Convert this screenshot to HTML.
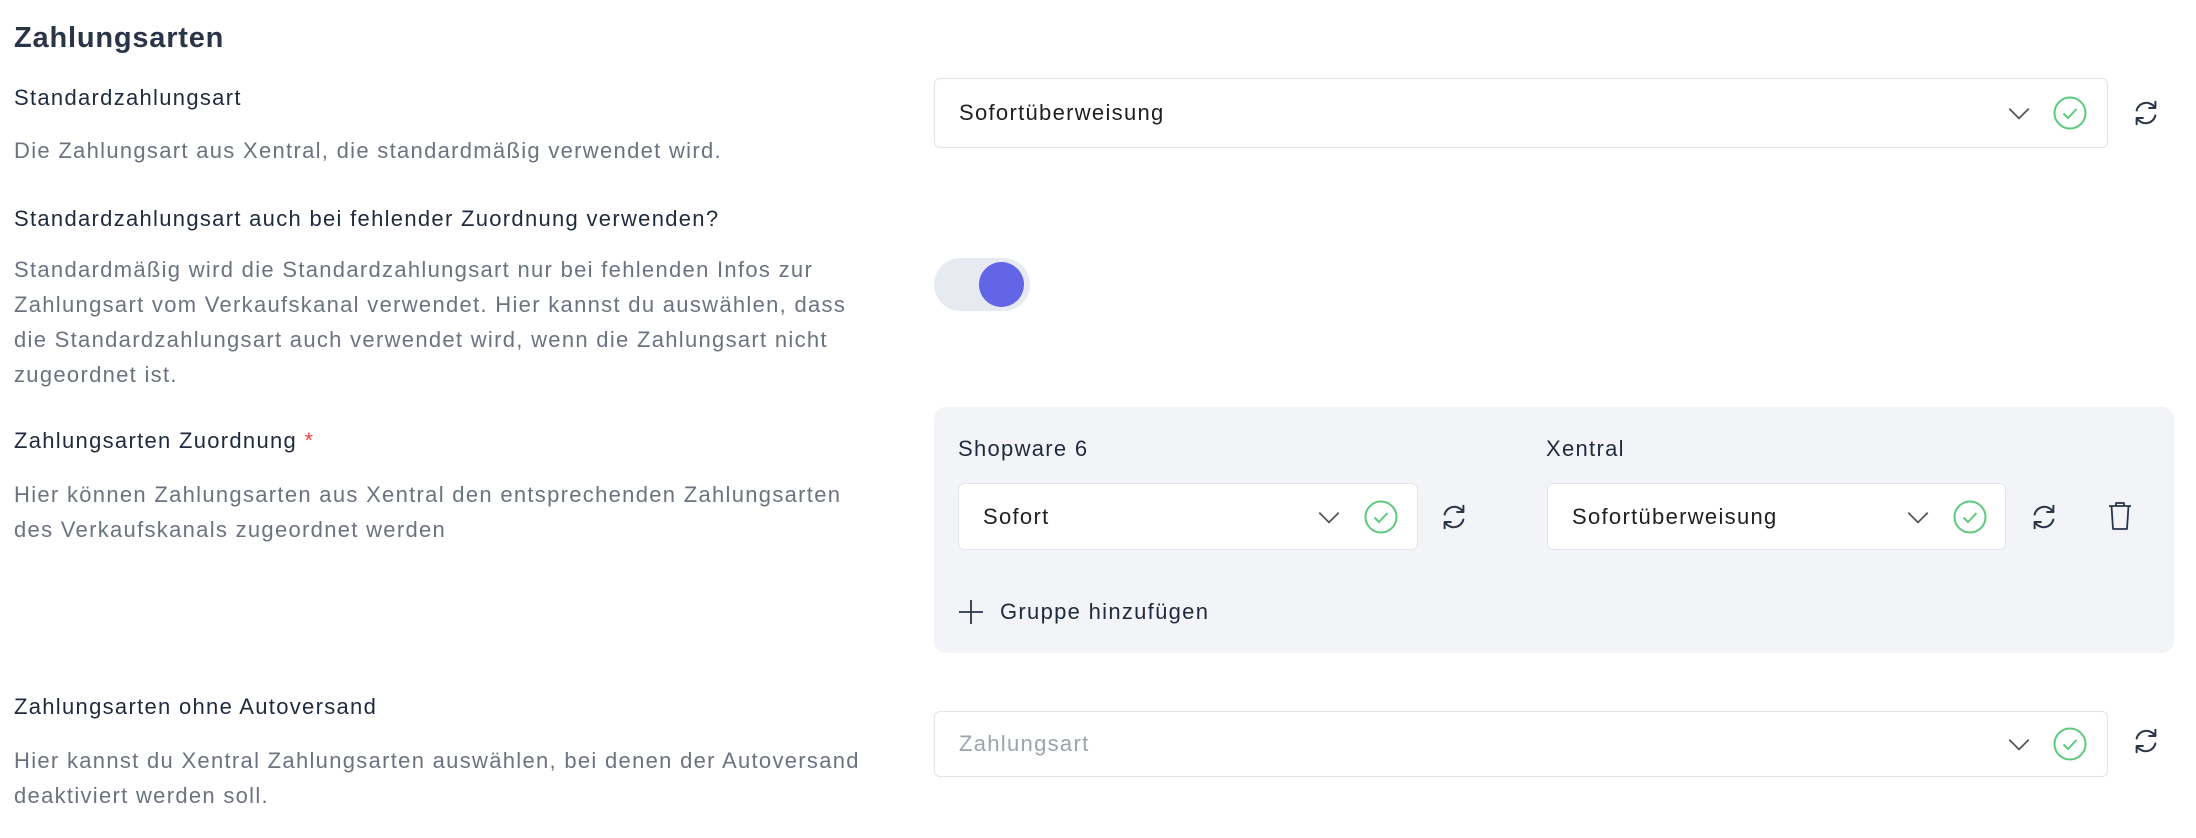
<!DOCTYPE html>
<html><head><meta charset="utf-8"><style>
*{box-sizing:border-box;margin:0;padding:0}
body{width:2196px;height:838px;background:#fff;font-family:"Liberation Sans",sans-serif;position:relative;overflow:hidden;color:#1f2937}
.a{position:absolute;white-space:nowrap}
h1{position:absolute;left:14px;top:22px;font-size:29px;font-weight:bold;color:#2a3548;letter-spacing:0.8px}
.lbl{font-size:22px;color:#1f2a3c;letter-spacing:1.3px}
.desc{font-size:22px;color:#6b7280;line-height:35px;letter-spacing:1.3px}
.sel{position:absolute;background:#fff;border:1.5px solid #e2e4e9;border-radius:6px}
.sel .t{position:absolute;left:24px;top:50%;transform:translateY(-50%);font-size:22px;color:#1f1f1f;letter-spacing:1.3px}
.sel svg{position:absolute;top:50%;transform:translateY(-50%)}
.ic{position:absolute}
</style></head><body>
<h1>Zahlungsarten</h1>
<div class="a lbl" style="left:14px;top:85px">Standardzahlungsart</div>
<div class="a desc" style="left:14px;top:133px">Die Zahlungsart aus Xentral, die standardmäßig verwendet wird.</div>
<div class="a lbl" style="left:14px;top:206px">Standardzahlungsart auch bei fehlender Zuordnung verwenden?</div>
<div class="a desc" style="left:14px;top:252px">Standardmäßig wird die Standardzahlungsart nur bei fehlenden Infos zur<br>Zahlungsart vom Verkaufskanal verwendet. Hier kannst du auswählen, dass<br>die Standardzahlungsart auch verwendet wird, wenn die Zahlungsart nicht<br>zugeordnet ist.</div>
<div class="a lbl" style="left:14px;top:428px">Zahlungsarten Zuordnung <span style="color:#ef4444">*</span></div>
<div class="a desc" style="left:14px;top:477px">Hier können Zahlungsarten aus Xentral den entsprechenden Zahlungsarten<br>des Verkaufskanals zugeordnet werden</div>
<div class="a lbl" style="left:14px;top:694px">Zahlungsarten ohne Autoversand</div>
<div class="a desc" style="left:14px;top:743px">Hier kannst du Xentral Zahlungsarten auswählen, bei denen der Autoversand<br>deaktiviert werden soll.</div>

<svg width="0" height="0" style="position:absolute"><defs>
<symbol id="chev" viewBox="0 0 24 24"><path d="M3 8l9 9 9-9" fill="none" stroke="#555" stroke-width="1.6"/></symbol>
<symbol id="chk" viewBox="0 0 34 34"><circle cx="17" cy="17" r="15.5" fill="none" stroke="#5cc97c" stroke-width="2"/><path d="M10.5 17.5l4.5 4.5 8.5-9" fill="none" stroke="#5cc97c" stroke-width="2"/></symbol>
<symbol id="ref" viewBox="0 0 24 24"><g fill="none" stroke="#2a3548" stroke-width="1.6" stroke-linecap="round" stroke-linejoin="round"><path d="M4.5 10A8 8 0 0 1 19 7.5"/><path d="M19.5 3v5h-5"/><path d="M19.5 14A8 8 0 0 1 5 16.5"/><path d="M4.5 21v-5h5"/></g></symbol>
</defs></svg>

<div class="sel" style="left:934px;top:78px;width:1174px;height:70px"><div class="t">Sofortüberweisung</div>
<svg style="left:1071px" width="26" height="26"><use href="#chev"/></svg><svg style="left:1118px" width="34" height="34"><use href="#chk"/></svg></div>
<svg class="ic" style="left:2131px;top:98px" width="30" height="30"><use href="#ref"/></svg>

<div class="a" style="left:934px;top:258px;width:96px;height:53px;border-radius:27px;background:#e7eaf0"></div>
<div class="a" style="left:979px;top:262px;width:45px;height:45px;border-radius:50%;background:#6165e6"></div>

<div class="a" style="left:934px;top:407px;width:1240px;height:246px;background:#f3f4f7;border-radius:12px"></div>
<div class="a lbl" style="left:958px;top:436px">Shopware 6</div>
<div class="a lbl" style="left:1546px;top:436px">Xentral</div>
<div class="sel" style="left:958px;top:483px;width:460px;height:67px"><div class="t">Sofort</div>
<svg style="left:357px" width="26" height="26"><use href="#chev"/></svg><svg style="left:405px" width="34" height="34"><use href="#chk"/></svg></div>
<svg class="ic" style="left:1439px;top:502px" width="30" height="30"><use href="#ref"/></svg>
<div class="sel" style="left:1547px;top:483px;width:459px;height:67px"><div class="t">Sofortüberweisung</div>
<svg style="left:357px" width="26" height="26"><use href="#chev"/></svg><svg style="left:405px" width="34" height="34"><use href="#chk"/></svg></div>
<svg class="ic" style="left:2029px;top:502px" width="30" height="30"><use href="#ref"/></svg>
<svg class="ic" style="left:2106px;top:500px" width="28" height="32" viewBox="0 0 28 32"><g fill="none" stroke="#2a3548" stroke-width="1.8" stroke-linejoin="round"><path d="M3 6h22"/><path d="M10 6V3h8v3"/><path d="M5.5 6l1.5 23h14l1.5-23"/></g></svg>
<svg class="ic" style="left:958px;top:599px" width="26" height="26"><path d="M13 1v24M1 13h24" stroke="#2a3548" stroke-width="1.8"/></svg>
<div class="a lbl" style="left:1000px;top:599px">Gruppe hinzufügen</div>

<div class="sel" style="left:934px;top:711px;width:1174px;height:66px"><div class="t" style="color:#9ca3af">Zahlungsart</div>
<svg style="left:1071px" width="26" height="26"><use href="#chev"/></svg><svg style="left:1118px" width="34" height="34"><use href="#chk"/></svg></div>
<svg class="ic" style="left:2131px;top:726px" width="30" height="30"><use href="#ref"/></svg>
</body></html>
